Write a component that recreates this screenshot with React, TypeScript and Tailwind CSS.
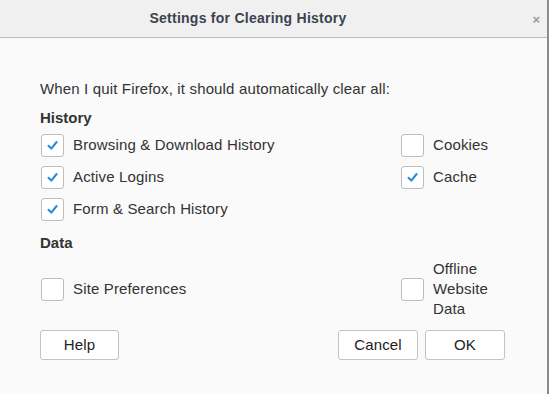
import React from "react";

const font = { fontFamily: '"Liberation Sans", Arial, sans-serif' };

function Box({ checked }: { checked: boolean }) {
  return (
    <div className="w-[23px] h-[23px] shrink-0 rounded-[3px] border border-[#bcbcbc] bg-white flex items-center justify-center">
      {checked && (
        <svg width="21" height="21" viewBox="0 0 21 21">
          <path d="M6.5 10.8 L9.3 13.6 L14.6 7" fill="none" stroke="#1f8ad9" strokeWidth="2" strokeLinecap="round" strokeLinejoin="round" />
        </svg>
      )}
    </div>
  );
}

function Row({ checked, label }: { checked: boolean; label: React.ReactNode }) {
  return (
    <div className="h-[32px] flex items-center gap-[9px]">
      <Box checked={checked} />
      <span className="text-[15px] tracking-[0.15px] text-[#333] leading-[20px]">{label}</span>
    </div>
  );
}

function Btn({ label, w }: { label: string; w: string }) {
  return (
    <div className={`${w} h-[30px] rounded-[3px] border border-[#c3c3c3] bg-white flex items-center justify-center text-[15px] tracking-[0.15px] text-[#222]`}>
      {label}
    </div>
  );
}

export default function App() {
  return (
    <div style={font} className="w-[549px] h-[394px] bg-[#fafafa] flex flex-col border-r-2 border-[#8c8c8c] overflow-hidden">
      <div className="h-[38px] shrink-0 bg-[#f0f0f0] border-b border-[#bdbdbd] flex items-center justify-center pr-[51px] relative">
        <div className="text-center text-[14px] tracking-[0.25px] font-bold text-[#3a4350]">Settings for Clearing History</div>
        <div className="absolute right-[7px] top-[13px] text-[#9a9a9a] text-[13px] font-bold leading-none">×</div>
      </div>
      <div className="pl-[40px] pt-[41px] flex flex-col">
        <div className="h-[20px] leading-[20px] text-[15px] tracking-[0.15px] text-[#333]">When I quit Firefox, it should automatically clear all:</div>
        <div className="mt-[9px] h-[20px] leading-[20px] text-[15px] font-bold text-[#333]">History</div>
        <div className="mt-[1px] grid grid-cols-[360px_1fr] pl-[1px]">
          <div className="flex flex-col">
            <Row checked label="Browsing & Download History" />
            <Row checked label="Active Logins" />
            <Row checked label="Form & Search History" />
          </div>
          <div className="flex flex-col">
            <Row checked={false} label="Cookies" />
            <Row checked label="Cache" />
          </div>
        </div>
        <div className="mt-[8px] h-[20px] leading-[20px] text-[15px] font-bold text-[#333]">Data</div>
        <div className="mt-[6px] grid grid-cols-[360px_1fr] pl-[1px] items-center">
          <div className="h-[60px] flex items-center gap-[9px]">
            <Box checked={false} />
            <span className="text-[15px] tracking-[0.15px] text-[#333]">Site Preferences</span>
          </div>
          <div className="h-[60px] flex items-center gap-[9px]">
            <Box checked={false} />
            <span className="text-[15px] tracking-[0.15px] text-[#333] leading-[20px]">Offline<br />Website<br />Data</span>
          </div>
        </div>
        <div className="mt-[11px] flex items-center pr-[42px]">
          <Btn label="Help" w="w-[79px]" />
          <div className="flex-1" />
          <div className="flex gap-[7px]">
            <Btn label="Cancel" w="w-[80px]" />
            <Btn label="OK" w="w-[80px]" />
          </div>
        </div>
      </div>
    </div>
  );
}
